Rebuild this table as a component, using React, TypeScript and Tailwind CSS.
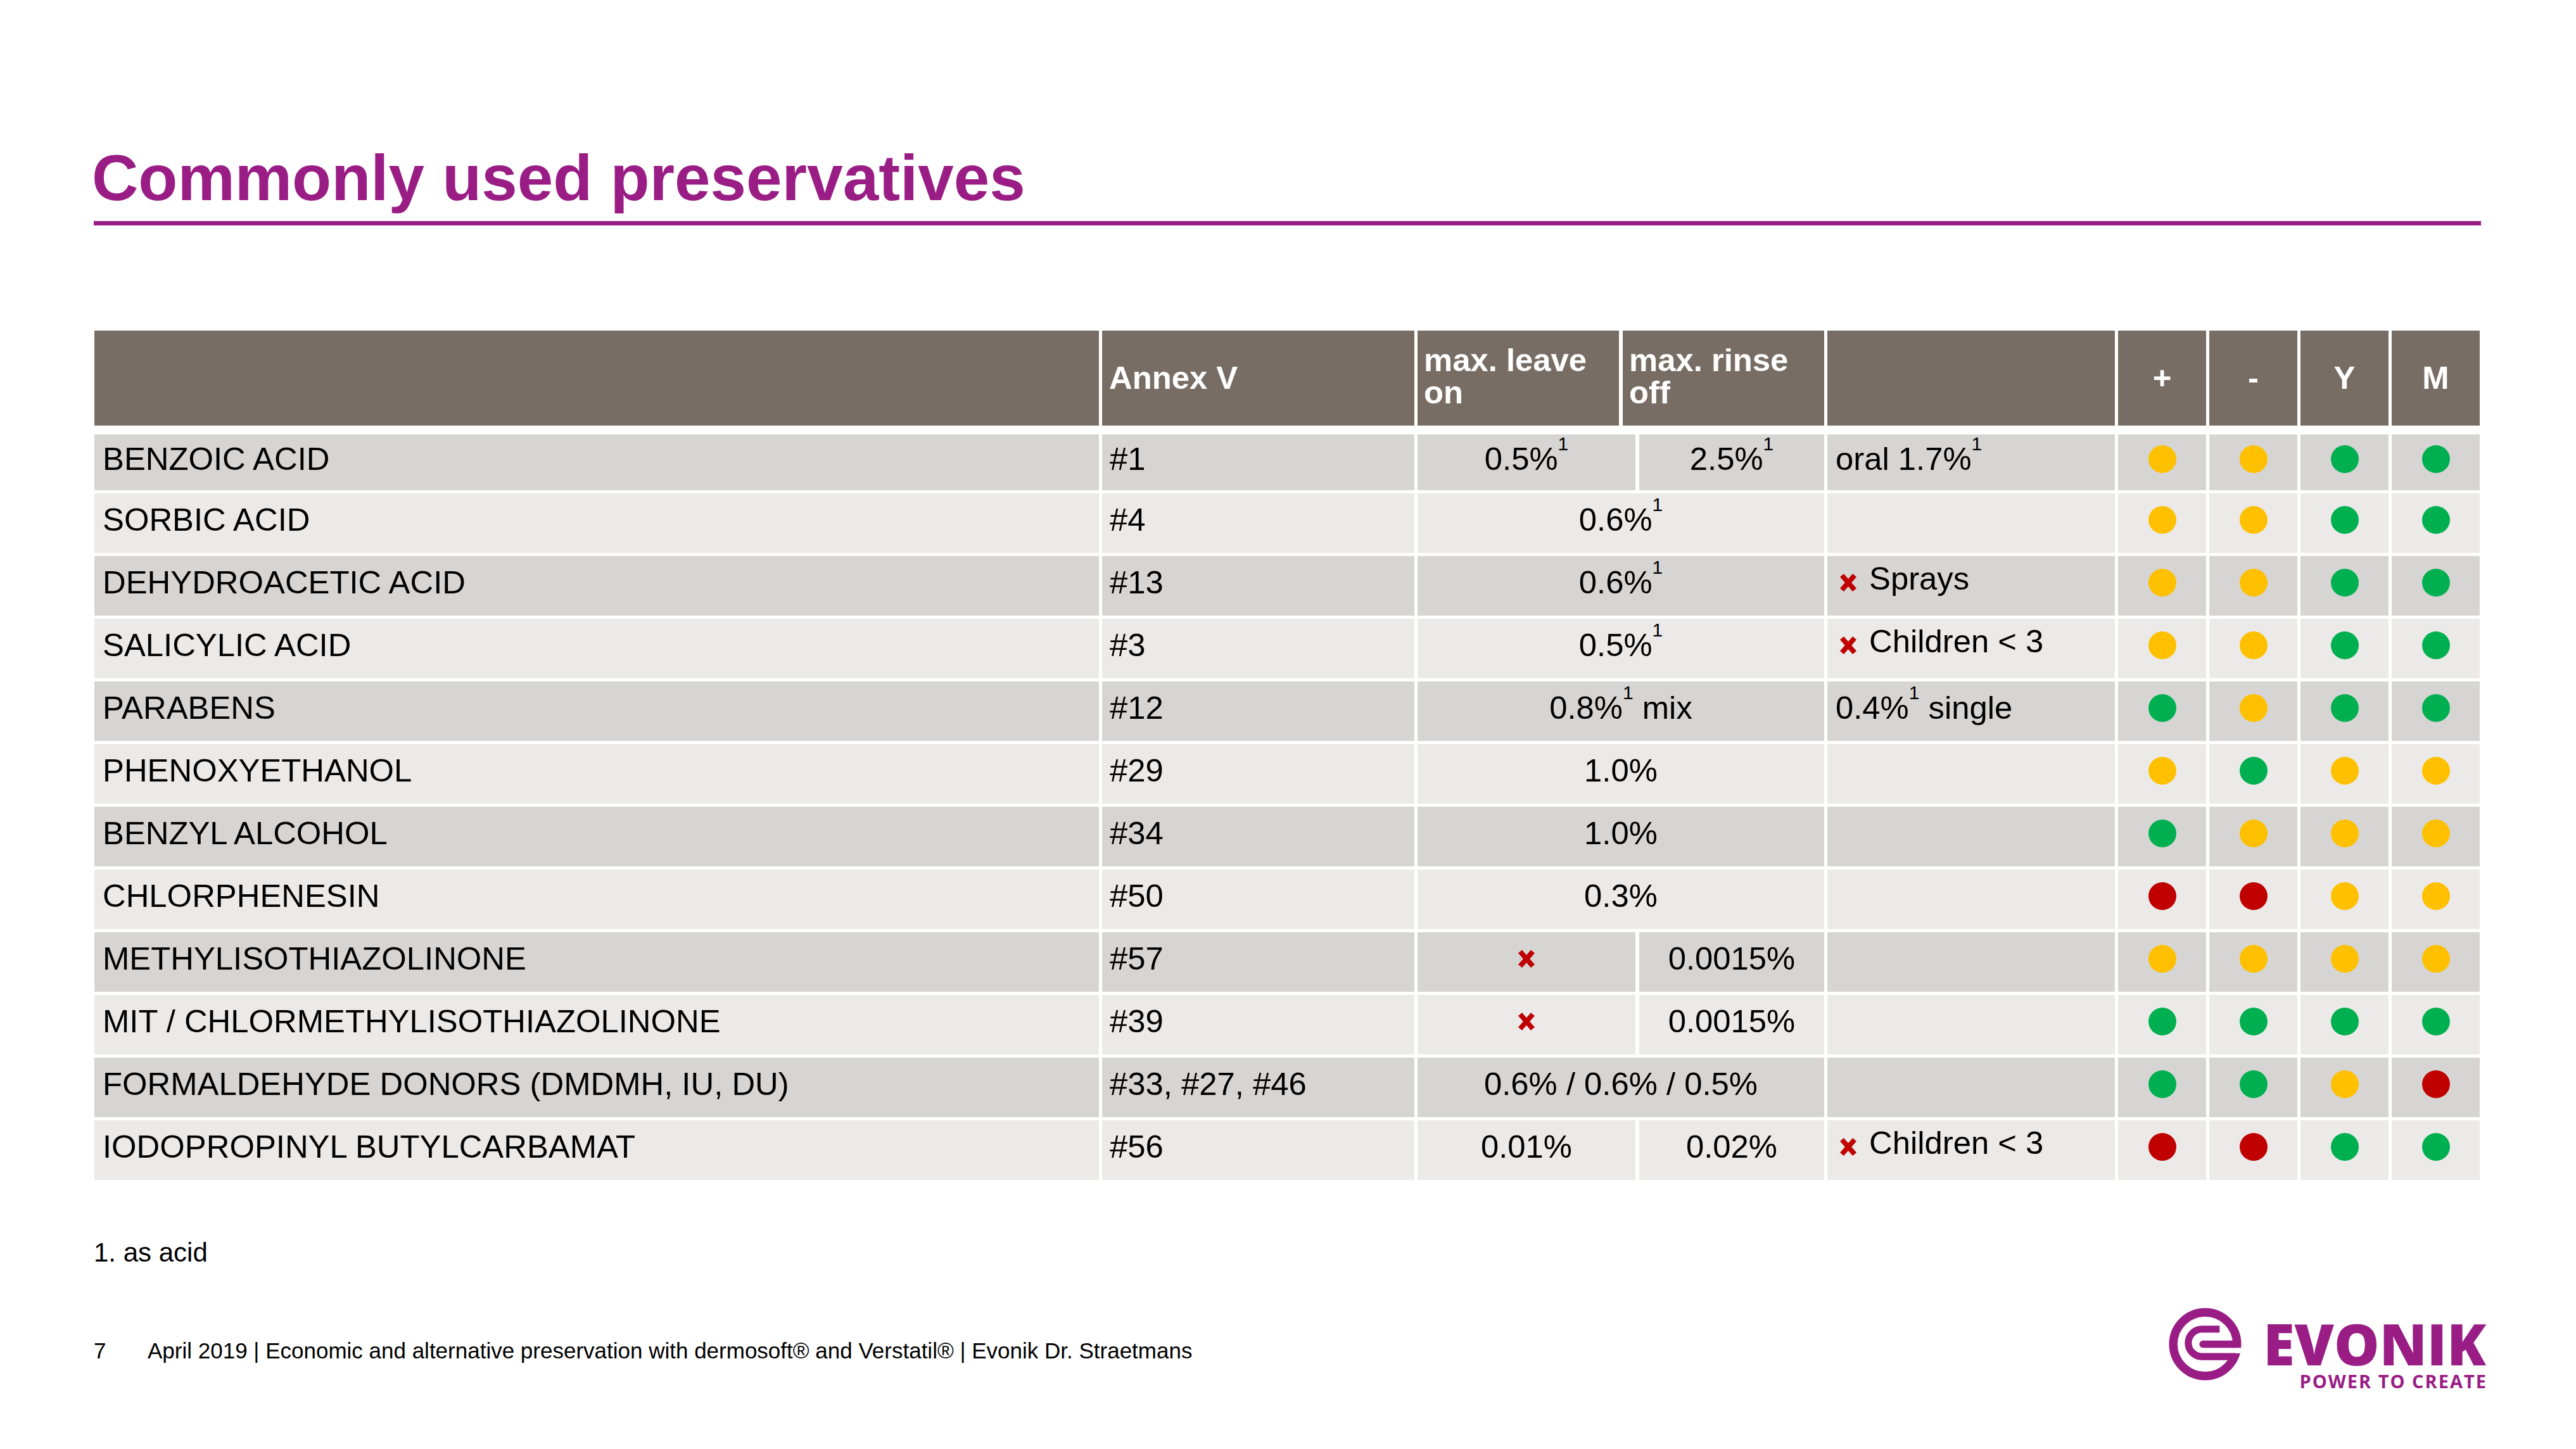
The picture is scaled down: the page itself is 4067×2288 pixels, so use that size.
import React from 'react';

type Mid =
  | { kind: 'merged'; c: React.ReactNode }
  | { kind: 'split'; l: React.ReactNode; r: React.ReactNode };

type RowData = {
  name: string;
  annex: string;
  mid: Mid;
  comment?: React.ReactNode;
  dots: string[];
};

const Y = 'bg-[#FFC000]';
const G = 'bg-[#00B050]';
const R = 'bg-[#C00000]';

function Sup() {
  return <span className="text-[30px] leading-[0px] align-[31px]">1</span>;
}

function XMark({ className = '' }: { className?: string }) {
  return (
    <svg width="30" height="30" viewBox="0 0 30 30" className={className} overflow="visible">
      <path d="M5 3.5 L25 26.5 M25 3.5 L5 26.5" stroke="#C00000" strokeWidth="8" />
    </svg>
  );
}

function XComment({ text }: { text: string }) {
  return (
    <>
      <XMark className="ml-[5px] shrink-0" />
      <span className="ml-[18px] mb-[12px]">{text}</span>
    </>
  );
}

const rows: RowData[] = [
  {
    name: 'BENZOIC ACID',
    annex: '#1',
    mid: { kind: 'split', l: <span>0.5%<Sup /></span>, r: <span>2.5%<Sup /></span> },
    comment: <span>oral 1.7%<Sup /></span>,
    dots: [Y, Y, G, G],
  },
  {
    name: 'SORBIC ACID',
    annex: '#4',
    mid: { kind: 'merged', c: <span>0.6%<Sup /></span> },
    dots: [Y, Y, G, G],
  },
  {
    name: 'DEHYDROACETIC ACID',
    annex: '#13',
    mid: { kind: 'merged', c: <span>0.6%<Sup /></span> },
    comment: <XComment text="Sprays" />,
    dots: [Y, Y, G, G],
  },
  {
    name: 'SALICYLIC ACID',
    annex: '#3',
    mid: { kind: 'merged', c: <span>0.5%<Sup /></span> },
    comment: <XComment text="Children < 3" />,
    dots: [Y, Y, G, G],
  },
  {
    name: 'PARABENS',
    annex: '#12',
    mid: { kind: 'merged', c: <span>0.8%<Sup /> mix</span> },
    comment: <span>0.4%<Sup /> single</span>,
    dots: [G, Y, G, G],
  },
  {
    name: 'PHENOXYETHANOL',
    annex: '#29',
    mid: { kind: 'merged', c: <span>1.0%</span> },
    dots: [Y, G, Y, Y],
  },
  {
    name: 'BENZYL ALCOHOL',
    annex: '#34',
    mid: { kind: 'merged', c: <span>1.0%</span> },
    dots: [G, Y, Y, Y],
  },
  {
    name: 'CHLORPHENESIN',
    annex: '#50',
    mid: { kind: 'merged', c: <span>0.3%</span> },
    dots: [R, R, Y, Y],
  },
  {
    name: 'METHYLISOTHIAZOLINONE',
    annex: '#57',
    mid: { kind: 'split', l: <XMark />, r: <span>0.0015%</span> },
    dots: [Y, Y, Y, Y],
  },
  {
    name: 'MIT / CHLORMETHYLISOTHIAZOLINONE',
    annex: '#39',
    mid: { kind: 'split', l: <XMark />, r: <span>0.0015%</span> },
    dots: [G, G, G, G],
  },
  {
    name: 'FORMALDEHYDE DONORS (DMDMH, IU, DU)',
    annex: '#33, #27, #46',
    mid: { kind: 'merged', c: <span>0.6% / 0.6% / 0.5%</span> },
    dots: [G, G, Y, R],
  },
  {
    name: 'IODOPROPINYL BUTYLCARBAMAT',
    annex: '#56',
    mid: { kind: 'split', l: <span>0.01%</span>, r: <span>0.02%</span> },
    comment: <XComment text="Children < 3" />,
    dots: [R, R, G, G],
  },
];

function Row({ r, i }: { r: RowData; i: number }) {
  const bg = i % 2 === 0 ? 'bg-[#D6D5D3]' : 'bg-[#EBEAE8]';
  const h = i === 0 ? 'h-[88px]' : 'h-[94px]';
  return (
    <div className={`flex gap-[5px] ${h}`}>
      <div className={`w-[1586px] shrink-0 ${bg} flex items-center pb-[10px] pl-[13px]`}>{r.name}</div>
      <div className={`w-[493px] shrink-0 ${bg} flex items-center pb-[10px] pl-[12px]`}>{r.annex}</div>
      {r.mid.kind === 'merged' ? (
        <div className={`w-[642px] shrink-0 ${bg} flex items-center justify-center pb-[10px]`}>{r.mid.c}</div>
      ) : (
        <div className="w-[642px] shrink-0 flex gap-[6px]">
          <div className={`w-[344px] ${bg} flex items-center justify-center pb-[10px]`}>{r.mid.l}</div>
          <div className={`w-[292px] ${bg} flex items-center justify-center pb-[10px]`}>{r.mid.r}</div>
        </div>
      )}
      <div className={`w-[454px] shrink-0 ${bg} flex items-center pb-[10px] pl-[13px]`}>{r.comment}</div>
      {r.dots.map((d, j) => (
        <div key={j} className={`w-[139px] shrink-0 ${bg} flex items-center justify-center pb-[10px]`}>
          <span className={`block w-[44px] h-[44px] rounded-full ${d}`} />
        </div>
      ))}
    </div>
  );
}

function Header() {
  const hb = 'bg-[#786D64]';
  return (
    <div className="flex gap-[5px] h-[150px] text-white font-bold">
      <div className={`w-[1586px] shrink-0 ${hb}`} />
      <div className={`w-[493px] shrink-0 ${hb} flex items-center pl-[11px]`}>Annex V</div>
      <div className="w-[642px] shrink-0 flex gap-[6px]">
        <div className={`w-[318px] ${hb} flex items-center pl-[10px] pb-[6px] leading-[51px]`}>
          <span>
            max. leave
            <br />
            on
          </span>
        </div>
        <div className={`w-[318px] ${hb} flex items-center pl-[10px] pb-[6px] leading-[51px]`}>
          <span>
            max. rinse
            <br />
            off
          </span>
        </div>
      </div>
      <div className={`w-[454px] shrink-0 ${hb}`} />
      {['+', '-', 'Y', 'M'].map((t) => (
        <div key={t} className={`w-[139px] shrink-0 ${hb} flex items-center justify-center`}>
          {t}
        </div>
      ))}
    </div>
  );
}

function EvonikSymbol() {
  return (
    <svg width="115" height="115" viewBox="0 0 116 116" className="shrink-0">
      <circle cx="58" cy="58" r="50.75" fill="none" stroke="#991D85" strokeWidth="13.5" />
      <rect x="60" y="63.8" width="60" height="8.7" fill="#ffffff" />
      <path d="M54.6 58 H106" stroke="#991D85" strokeWidth="11.6" strokeLinecap="round" />
      <path d="M81 34 H53 A21.9 21.9 0 0 0 53 77.8 H106" fill="none" stroke="#991D85" strokeWidth="11.2" />
    </svg>
  );
}

export default function App() {
  return (
    <div className="w-[4067px] h-[2288px] bg-white overflow-hidden text-black font-['Liberation_Sans',Arial,sans-serif]">
      <div className="pl-[148px] pr-[146px] pt-[230px] flex flex-col">
        <h1 className="text-[101.6px] leading-[102px] font-bold text-[#991D85] -ml-[3px]">
          Commonly used preservatives
        </h1>
        <div className="mt-[17px] h-[7px] w-[3769px] bg-[#991D85]" />

        <div className="mt-[166px] ml-[1px] flex flex-col text-[50.8px]">
          <Header />
          <div className="mt-[14px] flex flex-col gap-[5px]">
            {rows.map((r, i) => (
              <Row key={i} r={r} i={i} />
            ))}
          </div>
        </div>

        <div className="mt-[91px] text-[42px] leading-[48px]">1. as acid</div>

        <div className="mt-[63px] flex justify-between items-start">
          <div className="mt-[48px] flex text-[35px] leading-[40px]">
            <span className="w-[85px]">7</span>
            <span>
              April 2019 | Economic and alternative preservation with dermosoft® and Verstatil® | Evonik Dr.
              Straetmans
            </span>
          </div>
          <div className="flex items-start gap-[34px] -mr-[4px]">
            <EvonikSymbol />
            <div className="mt-[11px] flex flex-col items-end text-[#991D85] font-['Open_Sans',sans-serif]">
              <span className="text-[90px] leading-none font-extrabold">EVONIK</span>
              <span className="text-[29px] leading-none font-bold tracking-[2px] -mr-[2px]">POWER TO CREATE</span>
            </div>
          </div>
        </div>
      </div>
    </div>
  );
}
